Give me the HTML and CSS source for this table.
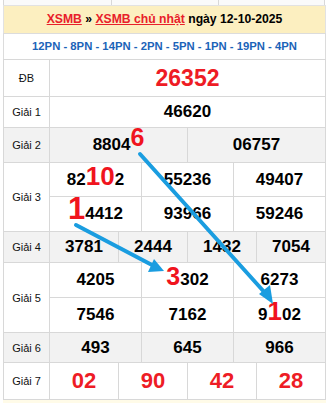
FILE: index.html
```html
<!DOCTYPE html>
<html lang="vi">
<head>
<meta charset="utf-8">
<link rel="stylesheet" href="styles.css">
</head>
<body>
<div class="page">
  <div class="prev"><span></span><span></span><span></span></div>
  <div class="box">
    <div class="title"><a href="#">XSMB</a> » <a href="#">XSMB chủ nhật</a> ngày 12-10-2025</div>
    <div class="codes">12PN - 8PN - 14PN - 2PN - 5PN - 1PN - 19PN - 4PN</div>
    <table class="kq">
      <colgroup>
        <col class="lbl">
        <col><col><col><col><col><col><col><col><col><col><col><col>
      </colgroup>
      <tr class="r-db"><td class="name">ĐB</td><td colspan="12" class="db">26352</td></tr>
      <tr class="r-1"><td class="name">Giải 1</td><td colspan="12">46620</td></tr>
      <tr class="r-2 gray"><td class="name">Giải 2</td><td colspan="6">8804<b class="h h6">6</b></td><td colspan="6">06757</td></tr>
      <tr class="r-3a"><td class="name" rowspan="2">Giải 3</td><td colspan="4">82<b class="h h10">10</b>2</td><td colspan="4">55236</td><td colspan="4">49407</td></tr>
      <tr class="r-3b"><td colspan="4"><b class="h h1">1</b>4412</td><td colspan="4">93966</td><td colspan="4">59246</td></tr>
      <tr class="r-4 gray"><td class="name">Giải 4</td><td colspan="3">3781</td><td colspan="3">2444</td><td colspan="3">1432</td><td colspan="3">7054</td></tr>
      <tr class="r-5a"><td class="name" rowspan="2">Giải 5</td><td colspan="4">4205</td><td colspan="4"><b class="h h3">3</b>302</td><td colspan="4">6273</td></tr>
      <tr class="r-5b"><td colspan="4">7546</td><td colspan="4">7162</td><td colspan="4">9<b class="h h9">1</b>02</td></tr>
      <tr class="r-6 gray"><td class="name">Giải 6</td><td colspan="4">493</td><td colspan="4">645</td><td colspan="4">966</td></tr>
      <tr class="r-7"><td class="name">Giải 7</td><td colspan="3" class="g7">02</td><td colspan="3" class="g7">90</td><td colspan="3" class="g7">42</td><td colspan="3" class="g7">28</td></tr>
    </table>
  </div>
  <div class="foot"></div>
  <svg class="arrows" width="329" height="403" viewBox="0 0 329 403">
    <g stroke="#1a9de0" stroke-width="4" stroke-linecap="round" fill="#1a9de0">
      <line x1="140" y1="154" x2="266" y2="294"/>
      <polygon stroke="none" points="273,304 259,294 270,285"/>
      <line x1="76" y1="225" x2="152" y2="265"/>
      <polygon stroke="none" points="164,271 148,272 154,259"/>
    </g>
  </svg>
</div>
</body>
</html>
```

FILE: styles.css
```css
html, body {
  margin: 0;
  padding: 0;
  background: #ffffff;
}
body {
  font-family: "Liberation Sans", Arial, sans-serif;
  color: #000;
}
.page {
  position: relative;
  width: 329px;
  height: 403px;
  overflow: hidden;
}
.prev {
  height: 5px;
  margin-left: 3px;
  width: 322px;
  display: grid;
  grid-template-columns: 107px 107px 1fr;
  background: #fafafa;
  border-left: 1px solid #d8d8d8;
  border-right: 1px solid #d8d8d8;
  box-sizing: border-box;
}
.prev span + span {
  border-left: 1px solid #d8d8d8;
}
.box {
  margin-left: 3px;
  width: 323px;
}
.title {
  height: 28px;
  box-sizing: border-box;
  background: #fcefc0;
  border: 1px solid #e2e2e2;
  border-bottom: none;
  text-align: center;
  font-size: 12.2px;
  font-weight: bold;
  line-height: 27px;
  white-space: nowrap;
}
.title a {
  color: #e8202a;
  text-decoration: underline;
}
.codes {
  height: 26px;
  box-sizing: border-box;
  border: 1px solid #dcdcdc;
  border-bottom: none;
  text-align: center;
  font-size: 11.3px;
  font-weight: bold;
  color: #1b63b8;
  line-height: 25px;
  white-space: nowrap;
}
.kq {
  width: 323px;
  border-collapse: collapse;
  table-layout: fixed;
}
.kq col.lbl {
  width: 46px;
}
.kq td {
  border: 1px solid #d8d8d8;
  padding: 0;
  text-align: center;
  vertical-align: middle;
  font-size: 17px;
  font-weight: bold;
  white-space: nowrap;
}
.kq td.name {
  font-size: 11px;
  font-weight: normal;
  color: #111;
}
.kq tr.gray td {
  background: #f2f2f2;
}
.r-db td { height: 36px; }
.r-1 td { height: 30px; }
.r-2 td { height: 34px; }
.r-3a td { height: 33px; }
.r-3b td { height: 34px; }
.r-4 td { height: 30px; }
.r-5a td { height: 34px; }
.r-5b td { height: 34px; }
.r-6 td { height: 29px; }
.r-7 td { height: 36px; }
.kq td.db {
  color: #ee1c25;
  font-size: 23px;
}
.kq td.g7 {
  color: #ee1c25;
  font-size: 22px;
}
.h {
  color: #f0141e;
  line-height: 0;
}
.h6 { font-size: 25px; position: relative; top: -4px; }
.h10 { font-size: 26px; position: relative; top: 0; }
.h1 { font-size: 31px; }
.h3 { font-size: 25px; }
.h9 { font-size: 26px; }
.foot {
  margin-left: 3px;
  width: 323px;
  height: 10px;
  background: #fffbe8;
}
.arrows {
  position: absolute;
  left: 0;
  top: 0;
  pointer-events: none;
}
```
